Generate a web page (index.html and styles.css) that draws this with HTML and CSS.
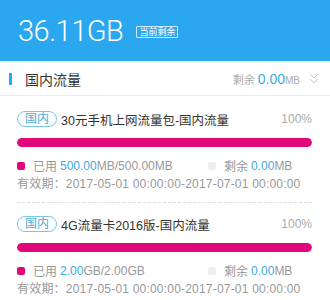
FILE: index.html
```html
<!DOCTYPE html>
<html lang="zh-CN">
  <head>
    <meta charset="UTF-8" />
    <meta name="viewport" content="width=device-width, initial-scale=1.0" />
    <title>流量剩余</title>
    <link rel="stylesheet" href="styles.css">
  </head>
  <body>
    <div class="total">
      <span class="total-num">36.11GB</span>
      <span class="total-badge">当前剩余</span>
    </div>

    <div class="group-head">
      <span class="group-mark"></span>
      <span class="group-name">国内流量</span>
      <span class="group-left">剩余 <b class="num">0.00</b><small>MB</small></span>
      <svg class="group-arrow" width="10" height="12" viewBox="0 0 10 12">
        <polyline points="1,1 5,5 9,1" />
        <polyline points="1,6 5,10 9,6" />
      </svg>
    </div>

    <div class="packs">
      <div class="pack">
        <div class="pack-title">
          <span class="tag">国内</span>
          <span class="pack-name">30元手机上网流量包-国内流量</span>
          <span class="pack-pct">100%</span>
        </div>
        <div class="bar"><div class="bar-fill" style="width: 100%"></div></div>
        <div class="legend">
          <span class="legend-item"><i class="dot used"></i>已用 <b class="num">500.00</b>MB/500.00MB</span>
          <span class="legend-item"><i class="dot rest"></i>剩余 <b class="num">0.00</b>MB</span>
        </div>
        <div class="date">有效期：2017-05-01 00:00:00-2017-07-01 00:00:00</div>
      </div>

      <div class="pack">
        <div class="pack-title">
          <span class="tag">国内</span>
          <span class="pack-name">4G流量卡2016版-国内流量</span>
          <span class="pack-pct">100%</span>
        </div>
        <div class="bar"><div class="bar-fill" style="width: 100%"></div></div>
        <div class="legend">
          <span class="legend-item"><i class="dot used"></i>已用 <b class="num">2.00</b>GB/2.00GB</span>
          <span class="legend-item"><i class="dot rest"></i>剩余 <b class="num">0.00</b>MB</span>
        </div>
        <div class="date">有效期：2017-05-01 00:00:00-2017-07-01 00:00:00</div>
      </div>
    </div>
  </body>
</html>
```

FILE: styles.css
```css
body {
  margin: 0;
  width: 330px;
  background: #fff;
  font-family: "Liberation Sans", "Noto Sans CJK SC", sans-serif;
  color: #333;
}
b {
  font-weight: normal;
}
.num {
  color: #3aabe0;
}

/* top total */
.total {
  height: 61px;
  background: #2aa7ee;
  display: flex;
  align-items: center;
  padding-left: 18px;
  border-bottom: 2px solid #eef1f4;
}
.total-num {
  font-family: Roboto, "Liberation Sans", sans-serif;
  font-weight: 300;
  font-size: 29px;
  color: #fff;
  letter-spacing: -0.5px;
}
.total-badge {
  margin-left: 13px;
  margin-top: 3px;
  border: 1px solid #cfeafc;
  color: #fff;
  font-size: 9px;
  line-height: 10px;
  padding: 0 2px;
  border-radius: 1px;
}

/* group header */
.group-head {
  height: 32px;
  display: flex;
  align-items: center;
  padding: 0 11px 0 9px;
  border-bottom: 1px solid #ececec;
}
.group-mark {
  width: 3px;
  height: 12px;
  background: #2aa7ee;
}
.group-name {
  margin-left: 13px;
  font-size: 14px;
  flex: 1;
}
.group-left {
  font-size: 11px;
  color: #aaa;
}
.group-left .num {
  font-size: 14px;
}
.group-left small {
  font-size: 10px;
}
.group-arrow {
  margin-left: 9px;
  fill: none;
  stroke: #c8c8c8;
  stroke-width: 1;
}

/* packages */
.packs {
  padding: 2px 18px 0 17px;
}
.pack {
  padding-top: 13px;
  padding-bottom: 10px;
  border-bottom: 1px dashed #ddd;
}
.pack:last-child {
  border-bottom: none;
}
.pack-title {
  display: flex;
  align-items: center;
  height: 16px;
}
.tag {
  font-size: 12px;
  line-height: 14px;
  color: #4aa9d8;
  border: 1px solid #7cc5e2;
  border-radius: 8px;
  padding: 0 7px;
}
.pack-name {
  margin-left: 4px;
  font-size: 12.5px;
  flex: 1;
}
.pack-pct {
  font-size: 12px;
  color: #aaa;
}
.bar {
  margin-top: 11px;
  height: 9px;
  border-radius: 5px;
  background: #eee;
  overflow: hidden;
}
.bar-fill {
  height: 100%;
  background: #e1077b;
  border-radius: 5px;
}
.legend {
  display: grid;
  grid-template-columns: 191px 1fr;
  margin-top: 10px;
  height: 16px;
  align-items: center;
  font-size: 12px;
  color: #999;
}
.legend-item {
  display: flex;
  align-items: center;
  white-space: nowrap;
}
.dot {
  flex-shrink: 0;
  width: 8px;
  height: 8px;
  border-radius: 2px;
  margin-right: 8px;
}
.dot.used {
  background: #e1077b;
}
.dot.rest {
  background: #eee;
}
.legend .num {
  margin-left: 3px;
}
.date {
  margin-top: 3px;
  height: 16px;
  line-height: 16px;
  font-size: 12px;
  letter-spacing: 0.2px;
  color: #999;
  white-space: nowrap;
}
```
